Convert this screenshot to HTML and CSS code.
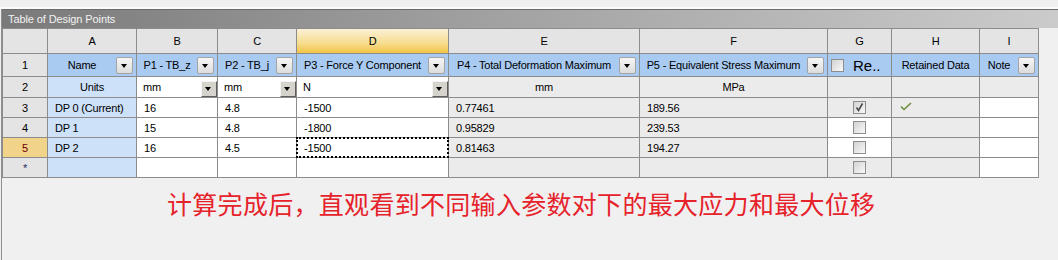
FILE: index.html
```html
<!DOCTYPE html>
<html lang="en">
<head>
    <meta charset="UTF-8">
    <title>Table of Design Points</title>
    <link rel="stylesheet" href="styles.css">
</head>
<body>
    <div class="topstrip"></div>
    <div class="panel">
        <div class="titlebar">Table of Design Points</div>

        <div class="grid">
            <!-- column letters -->
            <div class="hd"></div>
            <div class="hd">A</div>
            <div class="hd">B</div>
            <div class="hd">C</div>
            <div class="hd sel">D</div>
            <div class="hd">E</div>
            <div class="hd">F</div>
            <div class="hd">G</div>
            <div class="hd">H</div>
            <div class="hd">I</div>

            <!-- row 1: parameter names -->
            <div class="rh">1</div>
            <div class="nm"><span class="lbl">Name</span><span class="btn"></span></div>
            <div class="nm"><span class="lbl">P1 - TB_z</span><span class="btn"></span></div>
            <div class="nm"><span class="lbl">P2 - TB_j</span><span class="btn"></span></div>
            <div class="nm"><span class="lbl">P3 - Force Y Component</span><span class="btn"></span></div>
            <div class="nm"><span class="lbl">P4 - Total Deformation Maximum</span><span class="btn"></span></div>
            <div class="nm"><span class="lbl">P5 - Equivalent Stress Maximum</span><span class="btn"></span></div>
            <div class="nm retain"><span class="cb"></span><span class="re">Re..</span></div>
            <div class="nm"><span class="lbl">Retained Data</span></div>
            <div class="nm"><span class="lbl">Note</span><span class="btn"></span></div>

            <!-- row 2: units -->
            <div class="rh">2</div>
            <div class="a c">Units</div>
            <div class="in unit"><span>mm</span><span class="btn2"></span></div>
            <div class="in unit"><span>mm</span><span class="btn2"></span></div>
            <div class="in unit"><span>N</span><span class="btn2"></span></div>
            <div class="out c">mm</div>
            <div class="out c">MPa</div>
            <div class="out"></div>
            <div class="out"></div>
            <div class="out"></div>

            <!-- row 3 -->
            <div class="rh">3</div>
            <div class="a">DP 0 (Current)</div>
            <div class="in">16</div>
            <div class="in">4.8</div>
            <div class="in">-1500</div>
            <div class="out">0.77461</div>
            <div class="out">189.56</div>
            <div class="out c"><span class="cb checked"><svg width="11" height="11" viewBox="0 0 11 11"><polyline points="2.5,5.5 4.5,8.5 8.5,1.5" fill="none" stroke="#4a4a4a" stroke-width="1.6"/></svg></span></div>
            <div class="out"><svg class="ok" width="12" height="9" viewBox="0 0 12 9"><polyline points="1,4.5 4,7.5 11,1" fill="none" stroke="#6f8f3a" stroke-width="1.6"/></svg></div>
            <div class="in"></div>

            <!-- row 4 -->
            <div class="rh">4</div>
            <div class="a">DP 1</div>
            <div class="in">15</div>
            <div class="in">4.8</div>
            <div class="in">-1800</div>
            <div class="out">0.95829</div>
            <div class="out">239.53</div>
            <div class="in c"><span class="cb"></span></div>
            <div class="out"></div>
            <div class="in"></div>

            <!-- row 5 (current) -->
            <div class="rh cur">5</div>
            <div class="a">DP 2</div>
            <div class="in">16</div>
            <div class="in">4.5</div>
            <div class="in focus">-1500</div>
            <div class="out">0.81463</div>
            <div class="out">194.27</div>
            <div class="in c"><span class="cb"></span></div>
            <div class="out"></div>
            <div class="in"></div>

            <!-- new row -->
            <div class="rh star">*</div>
            <div class="a"></div>
            <div class="in"></div>
            <div class="in"></div>
            <div class="in"></div>
            <div class="out"></div>
            <div class="out"></div>
            <div class="out c"><span class="cb"></span></div>
            <div class="out"></div>
            <div class="in"></div>
        </div>

        <p class="note">计算完成后，直观看到不同输入参数对下的最大应力和最大位移</p>
    </div>
</body>
</html>
```

FILE: styles.css
```css
body {
    margin: 0;
    background-color: #f0f0f0;
    font-family: "Liberation Sans", Arial, sans-serif;
    font-size: 11px;
    letter-spacing: -0.2px;
    color: #000;
}
.topstrip {
    height: 7px;
    border-bottom: 2px solid #fbfbfb;
}
.panel {
    margin-left: 1px;
    height: 251px;
    border-left: 1px solid #8e8e8e;
}
.titlebar {
    height: 18px;
    line-height: 18px;
    border-top: 1px solid #6c6c6c;
    padding-left: 6px;
    font-size: 11px;
    letter-spacing: -0.1px;
    color: #f2f2f2;
    background: linear-gradient(to right, #7a7a7a, #9c9c9c 40%, #b4b4b4 70%, #cbcbcb);
}
.grid {
    display: grid;
    width: max-content;
    grid-template-columns: 44px 88px 80px 78px 151px 190px 187px 63px 87px 58px;
    grid-template-rows: 24px 22px 20px 19px 19px 19px 19px;
    gap: 1px;
    background-color: #8c8c8c;
    border: 1px solid #8c8c8c;
}
.grid > div {
    display: flex;
    align-items: center;
    padding-left: 7px;
    white-space: nowrap;
    overflow: hidden;
}
.grid > .c {
    justify-content: center;
    padding-left: 0;
}
.hd {
    background-color: #e4e4e4;
    justify-content: center;
    padding-left: 0 !important;
}
.hd.sel {
    background: linear-gradient(#fbf1d6, #f7dc8e 60%, #f2c445);
}
.rh {
    background-color: #e4e4e4;
    justify-content: center;
    padding-left: 0 !important;
}
.rh.cur {
    background-color: #f1d38a;
    color: #6a0000;
}
.rh.star {
    color: #1c2c5c;
}
.nm {
    background-color: #a9caf1;
    padding-left: 0 !important;
}
.nm .lbl {
    flex: 1;
    text-align: center;
}
.btn {
    width: 15px;
    height: 15px;
    margin-right: 3px;
    border: 1px solid #a4a4a4;
    border-radius: 2px;
    background: linear-gradient(#f6f6f6, #dcdcdc);
    position: relative;
}
.btn::after, .btn2::after {
    content: "";
    position: absolute;
    left: 4px;
    top: 6px;
    border-left: 3.5px solid transparent;
    border-right: 3.5px solid transparent;
    border-top: 4px solid #000;
}
.btn2 {
    width: 14px;
    height: 14px;
    margin-left: auto;
    align-self: flex-end;
    border: 1px solid;
    border-color: #f4f4f4 #5e5e5e #5e5e5e #f4f4f4;
    background-color: #d6d3cc;
    position: relative;
}
.btn2::after {
    left: 3px;
    top: 5px;
}
.retain {
    padding-left: 3px !important;
}
.re {
    font-size: 15px;
    margin-left: 9px;
    letter-spacing: 0;
}
.a {
    background-color: #cde1f9;
}
.in {
    background-color: #fff;
}
.out {
    background-color: #ebebeb;
}
.unit {
    padding-left: 6px !important;
}
.focus {
    outline: 2px dotted #000;
    outline-offset: -1px;
}
.cb {
    display: inline-block;
    box-sizing: border-box;
    width: 13px;
    height: 13px;
    border: 1px solid #8e8e8e;
    background: linear-gradient(135deg, #d2d2d2, #f9f9f9);
    position: relative;
}
.cb svg {
    position: absolute;
    left: 0;
    top: 0;
}
.ok {
    margin-left: 1px;
    margin-bottom: 2px;
}
.note {
    margin: 13px 0 0 165px;
    font-family: "Noto Sans CJK SC", sans-serif;
    font-size: 25px;
    line-height: 25px;
    letter-spacing: 0.3px;
    color: #e6222b;
}
```
